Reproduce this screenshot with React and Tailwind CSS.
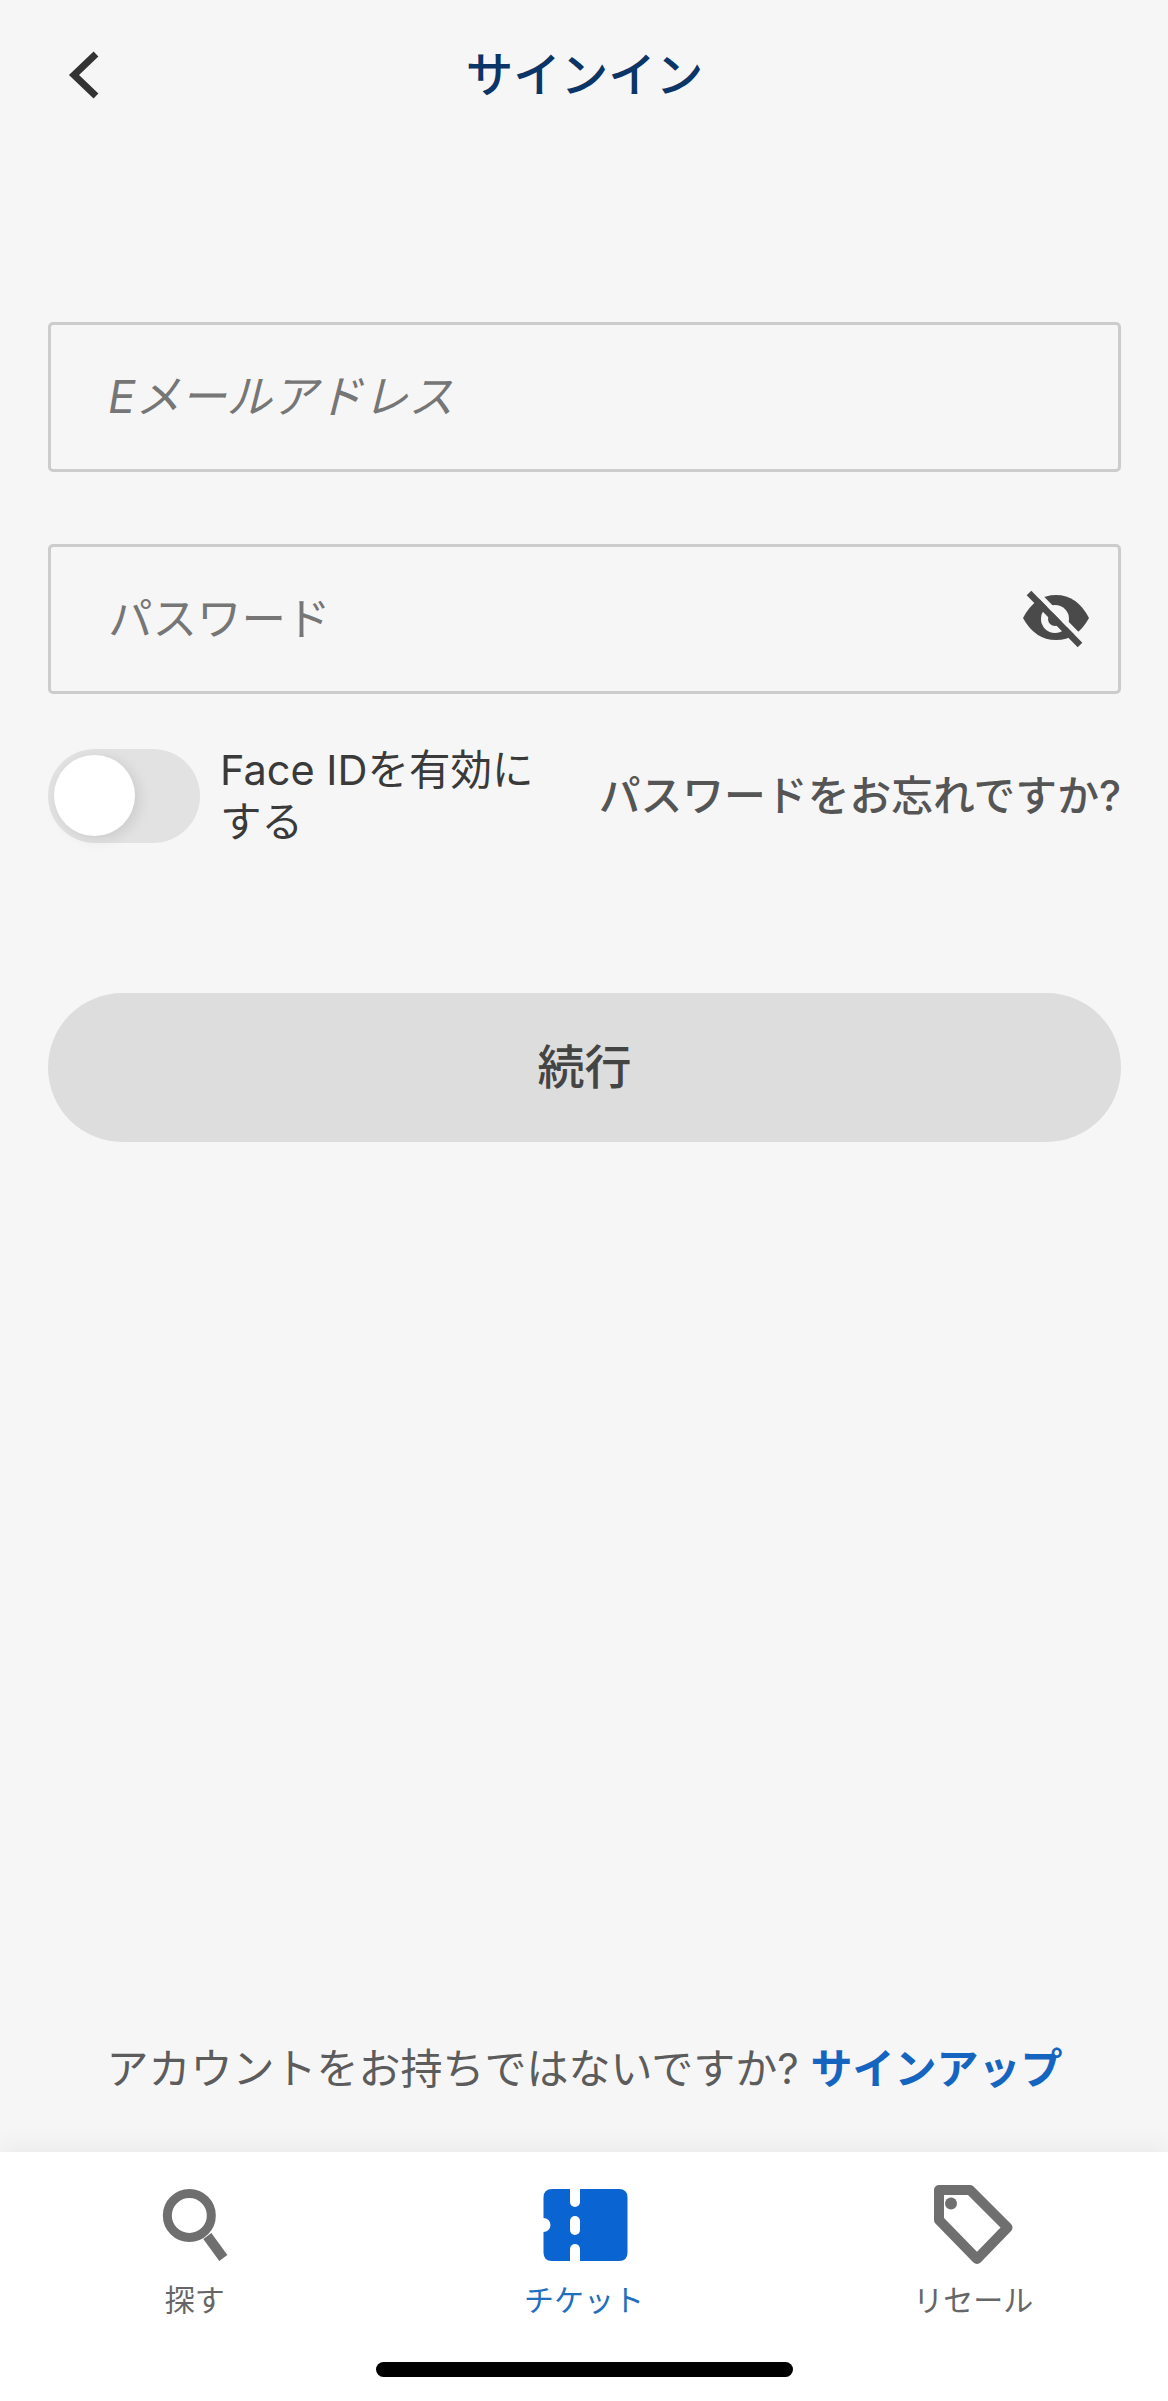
export default function App() {
  return (
    <div className="flex min-h-[2401px] flex-col bg-[#f6f6f6] font-['Inter','Noto_Sans_CJK_JP',sans-serif]">
      <header className="grid h-[150px] grid-cols-[1fr_auto_1fr] items-center pl-[48px] pr-[47px]">
        <svg viewBox="0 0 40 50" className="ml-[18px] h-[50px] w-[40px]" fill="none">
          <path d="M30 4 L8 25 L30 46" stroke="#333333" strokeWidth="7" strokeLinejoin="miter" />
        </svg>
        <h1 className="text-[47.5px] leading-[60px] font-medium text-[#0b3467]">サインイン</h1>
        <div />
      </header>

      <main className="flex flex-1 flex-col pl-[48px] pr-[47px] pt-[172px]">
        <div className="flex h-[150px] items-center rounded-[5px] border-[3px] border-[#cccccc] pl-[57px] text-[45.5px] italic text-[#767676]">
          Eメールアドレス
        </div>

        <div className="mt-[72px] flex h-[150px] items-center justify-between rounded-[5px] border-[3px] border-[#cccccc] pl-[57px] pr-[26px] text-[44.5px] text-[#767676]">
          <span>パスワード</span>
          <svg viewBox="0 0 70 62" className="mt-[4px] h-[62px] w-[70px]">
            <path d="M1 28 Q13 5 34 5 Q55 5 67 28 Q55 50 34 50 Q13 50 1 28 Z" fill="#4a4a4a" />
            <circle cx="33" cy="29" r="14" fill="#f6f6f6" />
            <circle cx="33" cy="29" r="7" fill="#4a4a4a" />
            <path d="M7 3 L58 55" stroke="#f6f6f6" strokeWidth="5" transform="translate(4 -4)" />
            <path d="M7 3 L58 55" stroke="#4a4a4a" strokeWidth="6.5" />
          </svg>
        </div>

        <div className="mt-[50px] flex items-center justify-between">
          <div className="flex items-center">
            <div className="relative h-[94px] w-[152px] rounded-full bg-[#e2e2e2]">
              <div className="absolute left-[6px] top-[6px] h-[81px] w-[81px] rounded-full bg-white shadow-[4px_3px_14px_rgba(0,0,0,0.1)]" />
            </div>
            <div className="ml-[20px] w-[322px] text-[41.5px] leading-[52px] text-[#3a3a3a]">Face IDを有効にする</div>
          </div>
          <div className="text-[41.8px] leading-[52px] font-medium whitespace-nowrap text-[#555555]">パスワードをお忘れですか?</div>
        </div>

        <button className="mt-[145px] flex h-[149px] items-center justify-center rounded-full bg-[#dddddd] text-[47px] font-medium text-[#444444]">
          続行
        </button>

        <div className="mt-auto mb-[55px] text-center text-[42px] leading-[56px] text-[#5c5c5c]">
          アカウントをお持ちではないですか? <span className="font-bold text-[#1565c0]">サインアップ</span>
        </div>
      </main>

      <nav className="relative h-[249px] bg-white pt-[32px] shadow-[0_-6px_24px_rgba(0,0,0,0.05)]">
        <div className="grid grid-cols-3">
          <div className="flex flex-col items-center">
            <svg viewBox="129.67 2184 130 84" className="h-[84px] w-[130px]" fill="none">
              <circle cx="189" cy="2215.5" r="22" stroke="#6f6f6f" strokeWidth="9" />
              <path d="M207 2236 L223 2258" stroke="#6f6f6f" strokeWidth="10" />
            </svg>
            <span className="mt-[12px] text-[30px] leading-[40px] text-[#666666]">探す</span>
          </div>
          <div className="flex flex-col items-center">
            <svg viewBox="519 2184 130 84" className="h-[84px] w-[130px]">
              <path d="M552 2189 H619 Q627.5 2189 627.5 2197.5 V2252.5 Q627.5 2261 619 2261 H552 Q543.5 2261 543.5 2252.5 V2232 A7 7 0 0 0 543.5 2218 V2197.5 Q543.5 2189 552 2189 Z" fill="#0a64d2" />
              <path d="M570 2189 H580 V2202 A5 5 0 0 1 570 2202 Z" fill="#ffffff" />
              <rect x="570" y="2216" width="10" height="19" rx="5" fill="#ffffff" />
              <path d="M570 2261 H580 V2249 A5 5 0 0 0 570 2249 Z" fill="#ffffff" />
            </svg>
            <span className="mt-[12px] text-[30px] leading-[40px] text-[#1f6fbf]">チケット</span>
          </div>
          <div className="flex flex-col items-center">
            <svg viewBox="909 2184 130 84" className="h-[84px] w-[130px]" fill="none">
              <path d="M940 2190 H971 L1008.5 2227.5 L978 2259 L940 2220 Z" stroke="#6f6f6f" strokeWidth="10" strokeLinejoin="round" />
              <circle cx="952" cy="2203.5" r="6" fill="#6f6f6f" />
            </svg>
            <span className="mt-[12px] text-[30px] leading-[40px] text-[#666666]">リセール</span>
          </div>
        </div>
        <div className="mx-auto mt-[42px] h-[15px] w-[417px] rounded-full bg-black" />
      </nav>
    </div>
  );
}
